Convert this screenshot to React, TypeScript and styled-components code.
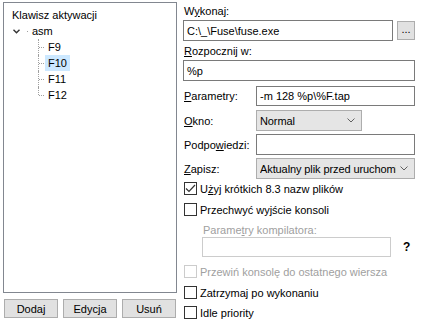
import React from "react";
import styled, { createGlobalStyle, css } from "styled-components";

const Global = createGlobalStyle`
  html, body { margin: 0; padding: 0; background: #ffffff; }
  body { font-family: "Liberation Sans", Arial, sans-serif; font-size: 11px; color: #000; }
  * { box-sizing: border-box; }
`;

const Page = styled.div`
  display: flex;
  gap: 6px;
  padding: 2px 0 0 3px;
  width: 421px;
  height: 326px;
`;

const LeftCol = styled.div`
  display: flex;
  flex-direction: column;
  width: 174px;
`;

const Tree = styled.div`
  height: 291px;
  border: 1px solid #828790;
  padding: 4px 0 0 5px;
`;

const TreeRow = styled.div<{ $indent?: number }>`
  display: flex;
  align-items: center;
  height: 16px;
  padding-left: ${(p) => p.$indent ?? 0}px;
`;

const Chevron = styled.svg`
  width: 7px;
  height: 5px;
  margin: 0 7px 0 4px;
  flex: none;
`;

const RootDot = styled.span`
  width: 1px;
  height: 1px;
  background: #a0a0a0;
  margin-right: 1px;
`;

const Connector = styled.span<{ $last?: boolean }>`
  position: relative;
  align-self: stretch;
  width: 7px;
  flex: none;
  &::before {
    content: "";
    position: absolute;
    left: 0;
    top: 0;
    height: ${(p) => (p.$last ? "8px" : "16px")};
    border-left: 1px dotted #a0a0a0;
  }
  &::after {
    content: "";
    position: absolute;
    left: 1px;
    top: 8px;
    width: 5px;
    border-top: 1px dotted #a0a0a0;
  }
`;

const ItemText = styled.span<{ $selected?: boolean }>`
  padding: 0 3px;
  line-height: 16px;
  background: ${(p) => (p.$selected ? "#cce8ff" : "transparent")};
`;

const ButtonRow = styled.div`
  display: flex;
  gap: 5px;
  margin-top: 6px;
  padding-left: 1px;
`;

const Button = styled.button<{ $w?: number }>`
  width: ${(p) => p.$w ?? 54}px;
  height: 19px;
  padding: 0;
  background: #e1e1e1;
  border: 1px solid #adadad;
  font-family: inherit;
  font-size: 11px;
  font-weight: 400;
  color: #000;
`;

const RightCol = styled.div`
  display: flex;
  flex-direction: column;
  width: 232px;
`;

const TopLabel = styled.div<{ $h: number; $disabled?: boolean; $indent?: number; $bottom?: boolean }>`
  height: ${(p) => p.$h}px;
  display: flex;
  align-items: ${(p) => (p.$bottom ? "flex-end" : "center")};
  padding-bottom: ${(p) => (p.$bottom ? 1 : 0)}px;
  padding-left: ${(p) => 1 + (p.$indent ?? 0)}px;
  color: ${(p) => (p.$disabled ? "#a0a0a0" : "#000")};
`;

const fieldBase = css`
  border: 1px solid #7a7a7a;
  background: #fff;
  display: flex;
  align-items: center;
  padding-left: 3px;
  white-space: nowrap;
  overflow: hidden;
`;

const Edit = styled.div<{ $w?: number; $disabled?: boolean; $h?: number; $ml?: number }>`
  ${fieldBase};
  width: ${(p) => (p.$w ? `${p.$w}px` : "100%")};
  height: ${(p) => p.$h ?? 21}px;
  margin-left: ${(p) => p.$ml ?? 0}px;
  border-color: ${(p) => (p.$disabled ? "#cccccc" : "#7a7a7a")};
`;

const Line = styled.div<{ $mt?: number }>`
  display: flex;
  align-items: center;
  margin-top: ${(p) => p.$mt ?? 0}px;
`;

const SmallButton = styled.button`
  width: 18px;
  height: 19px;
  margin-left: 4px;
  padding: 0 0 4px;
  background: #e1e1e1;
  border: 1px solid #adadad;
  font-family: inherit;
  font-size: 11px;
  font-weight: 400;
  line-height: 10px;
`;

const FieldLabel = styled.div`
  width: 73px;
  padding-left: 1px;
`;

const Select = styled.div<{ $w?: number }>`
  height: 21px;
  width: ${(p) => (p.$w ? `${p.$w}px` : "159px")};
  background: #e5e5e5;
  border: 1px solid #adadad;
  display: flex;
  align-items: center;
  padding-left: 3px;
  white-space: nowrap;
  overflow: hidden;
`;

const SelectText = styled.span`
  flex: 1;
  overflow: hidden;
  letter-spacing: -0.1px;
`;

const Caret = styled.svg`
  width: 8px;
  height: 5px;
  margin: 0 6px 0 4px;
  flex: none;
`;

const CheckRow = styled.div<{ $mt?: number; $disabled?: boolean }>`
  display: flex;
  align-items: center;
  height: 15px;
  margin-top: ${(p) => p.$mt ?? 0}px;
  color: ${(p) => (p.$disabled ? "#a0a0a0" : "#000")};
`;

const Box = styled.span<{ $disabled?: boolean }>`
  width: 13px;
  height: 13px;
  border: 1px solid ${(p) => (p.$disabled ? "#cccccc" : "#333333")};
  margin: 0 3px 0 1px;
  display: flex;
  align-items: center;
  justify-content: center;
  flex: none;
`;

const Help = styled.span`
  font-weight: bold;
  margin-left: 12px;
  font-size: 12px;
`;

const U = styled.span`
  text-decoration: underline;
`;

function Check({ label, checked, disabled, mt }: { label: React.ReactNode; checked?: boolean; disabled?: boolean; mt?: number }) {
  return (
    <CheckRow $mt={mt} $disabled={disabled}>
      <Box $disabled={disabled}>
        {checked && (
          <svg width="11" height="9" viewBox="0 0 11 9">
            <path d="M1 4.5 L4 7.5 L10 1" fill="none" stroke="#333" strokeWidth="1.2" />
          </svg>
        )}
      </Box>
      {label}
    </CheckRow>
  );
}

function CaretIcon() {
  return (
    <Caret viewBox="0 0 8 5">
      <path d="M0.5 0.5 L4 4 L7.5 0.5" fill="none" stroke="#606060" strokeWidth="1" />
    </Caret>
  );
}

export default function App() {
  const keys = ["F9", "F10", "F11", "F12"];
  return (
    <>
      <Global />
      <Page>
        <LeftCol>
          <Tree>
            <TreeRow>
              <ItemText>Klawisz aktywacji</ItemText>
            </TreeRow>
            <TreeRow>
              <Chevron viewBox="0 0 7 5">
                <path d="M0.5 0.8 L3.5 3.8 L6.5 0.8" fill="none" stroke="#333" strokeWidth="1.4" />
              </Chevron>
              <RootDot />
              <ItemText>asm</ItemText>
            </TreeRow>
            {keys.map((k, i) => (
              <TreeRow key={k} $indent={29}>
                <Connector $last={i === keys.length - 1} />
                <ItemText $selected={k === "F10"}>{k}</ItemText>
              </TreeRow>
            ))}
          </Tree>
          <ButtonRow>
            <Button>Dodaj</Button>
            <Button>Edycja</Button>
            <Button>Usuń</Button>
          </ButtonRow>
        </LeftCol>
        <RightCol>
          <TopLabel $h={18}>
            <span>
              W<U>y</U>konaj:
            </span>
          </TopLabel>
          <Line>
            <Edit $w={210}>C:\_\Fuse\fuse.exe</Edit>
            <SmallButton>...</SmallButton>
          </Line>
          <TopLabel $h={19}>
            <span>
              <U>R</U>ozpocznij w:
            </span>
          </TopLabel>
          <Edit>%p</Edit>
          <Line $mt={5}>
            <FieldLabel>
              <U>P</U>arametry:
            </FieldLabel>
            <Edit $w={159} $h={20}>-m 128 %p\%F.tap</Edit>
          </Line>
          <Line $mt={4}>
            <FieldLabel>
              <U>O</U>kno:
            </FieldLabel>
            <Select $w={106}>
              <SelectText>Normal</SelectText>
              <CaretIcon />
            </Select>
          </Line>
          <Line $mt={3}>
            <FieldLabel>
              Podpo<U>w</U>iedzi:
            </FieldLabel>
            <Edit $w={159}></Edit>
          </Line>
          <Line $mt={3}>
            <FieldLabel>
              <U>Z</U>apisz:
            </FieldLabel>
            <Select>
              <SelectText>Aktualny plik przed uruchomieniem</SelectText>
              <CaretIcon />
            </Select>
          </Line>
          <Check mt={2} checked label={<span>U<U>ż</U>yj krótkich 8.3 nazw plików</span>} />
          <Check mt={6} label={<span>Przechwyć wyjście konsoli</span>} />
          <TopLabel $h={20} $bottom $disabled $indent={19}>
            <span>
              Parame<U>t</U>ry kompilatora:
            </span>
          </TopLabel>
          <Line>
            <Edit $w={189} $h={20} $disabled $ml={19} />
            <Help>?</Help>
          </Line>
          <Check mt={7} disabled label={<span>Przewiń konsolę do ostatnego wiersza</span>} />
          <Check mt={6} label={<span>Zatrzymaj po wykonaniu</span>} />
          <Check mt={5} label={<span>Idle priority</span>} />
        </RightCol>
      </Page>
    </>
  );
}
